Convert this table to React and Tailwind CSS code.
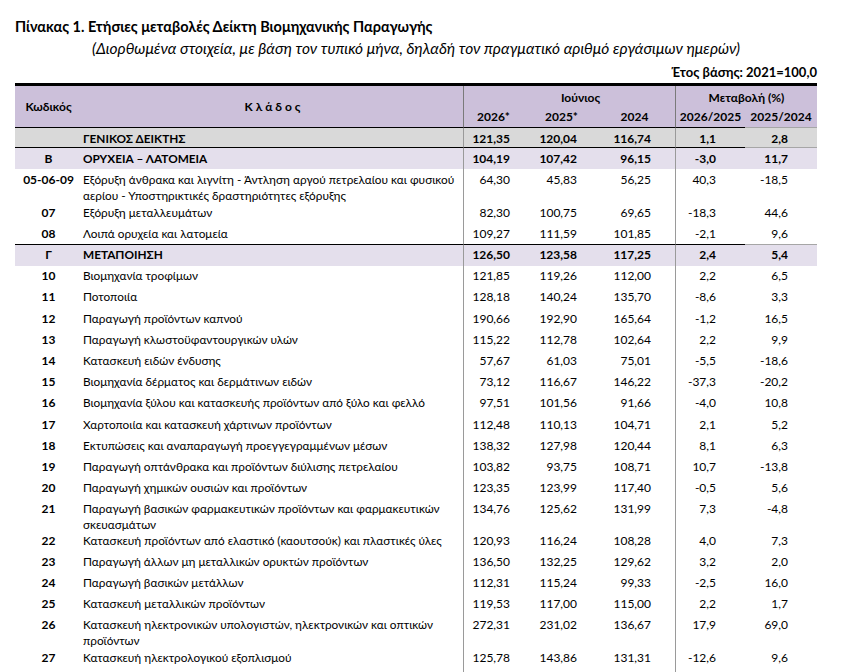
const rows = [
  { code: '', name: 'ΓΕΝΙΚΟΣ  ΔΕΙΚΤΗΣ', v: ['121,35', '120,04', '116,74', '1,1', '2,8'], kind: 'total', line: true, h: 'h-[20px]' },
  { code: 'Β', name: 'ΟΡΥΧΕΙΑ – ΛΑΤΟΜΕΙΑ', v: ['104,19', '107,42', '96,15', '-3,0', '11,7'], kind: 'section' },
  {
    code: '05-06-09',
    name: ['Εξόρυξη άνθρακα και λιγνίτη - Άντληση αργού πετρελαίου και φυσικού', 'αερίου - Υποστηρικτικές δραστηριότητες εξόρυξης'],
    v: ['64,30', '45,83', '56,25', '40,3', '-18,5'],
  },
  { code: '07', name: 'Εξόρυξη μεταλλευμάτων', v: ['82,30', '100,75', '69,65', '-18,3', '44,6'] },
  { code: '08', name: 'Λοιπά ορυχεία και λατομεία', v: ['109,27', '111,59', '101,85', '-2,1', '9,6'], line: true },
  { code: 'Γ', name: 'ΜΕΤΑΠΟΙΗΣΗ', v: ['126,50', '123,58', '117,25', '2,4', '5,4'], kind: 'section' },
  { code: '10', name: 'Βιομηχανία τροφίμων', v: ['121,85', '119,26', '112,00', '2,2', '6,5'] },
  { code: '11', name: 'Ποτοποιία', v: ['128,18', '140,24', '135,70', '-8,6', '3,3'] },
  { code: '12', name: 'Παραγωγή προϊόντων καπνού', v: ['190,66', '192,90', '165,64', '-1,2', '16,5'] },
  { code: '13', name: 'Παραγωγή κλωστοϋφαντουργικών υλών', v: ['115,22', '112,78', '102,64', '2,2', '9,9'] },
  { code: '14', name: 'Κατασκευή ειδών ένδυσης', v: ['57,67', '61,03', '75,01', '-5,5', '-18,6'] },
  { code: '15', name: 'Βιομηχανία δέρματος και δερμάτινων ειδών', v: ['73,12', '116,67', '146,22', '-37,3', '-20,2'] },
  { code: '16', name: 'Βιομηχανία ξύλου και κατασκευής προϊόντων από ξύλο και φελλό', v: ['97,51', '101,56', '91,66', '-4,0', '10,8'] },
  { code: '17', name: 'Χαρτοποιία και κατασκευή χάρτινων προϊόντων', v: ['112,48', '110,13', '104,71', '2,1', '5,2'] },
  { code: '18', name: 'Εκτυπώσεις και αναπαραγωγή προεγγεγραμμένων μέσων', v: ['138,32', '127,98', '120,44', '8,1', '6,3'] },
  { code: '19', name: 'Παραγωγή οπτάνθρακα και προϊόντων διύλισης πετρελαίου', v: ['103,82', '93,75', '108,71', '10,7', '-13,8'] },
  { code: '20', name: 'Παραγωγή χημικών ουσιών και προϊόντων', v: ['123,35', '123,99', '117,40', '-0,5', '5,6'] },
  {
    code: '21',
    name: ['Παραγωγή βασικών φαρμακευτικών προϊόντων και φαρμακευτικών', 'σκευασμάτων'],
    v: ['134,76', '125,62', '131,99', '7,3', '-4,8'],
    h: 'h-[32px]',
  },
  { code: '22', name: 'Κατασκευή προϊόντων από ελαστικό (καουτσούκ) και πλαστικές ύλες', v: ['120,93', '116,24', '108,28', '4,0', '7,3'], h: 'h-[21px]' },
  { code: '23', name: 'Παραγωγή άλλων μη μεταλλικών ορυκτών προϊόντων', v: ['136,50', '132,25', '129,62', '3,2', '2,0'], h: 'h-[21px]' },
  { code: '24', name: 'Παραγωγή βασικών μετάλλων', v: ['112,31', '115,24', '99,33', '-2,5', '16,0'], h: 'h-[21px]' },
  { code: '25', name: 'Κατασκευή μεταλλικών προϊόντων', v: ['119,53', '117,00', '115,00', '2,2', '1,7'], h: 'h-[21px]' },
  {
    code: '26',
    name: ['Κατασκευή ηλεκτρονικών υπολογιστών, ηλεκτρονικών και οπτικών', 'προϊόντων'],
    v: ['272,31', '231,02', '136,67', '17,9', '69,0'],
  },
  { code: '27', name: 'Κατασκευή ηλεκτρολογικού εξοπλισμού', v: ['125,78', '143,86', '131,31', '-12,6', '9,6'], h: 'h-[21px]' },
  { code: '28', name: 'Κατασκευή μηχανημάτων και ειδών εξοπλισμού π.δ.κ.', v: ['104,62', '98,17', '96,40', '6,6', '1,8'], h: 'h-[21px]' },
];

const pad = ['pr-[13px]', 'pr-[17px]', 'pr-[24px]', 'pr-[29px]', 'pr-[29px]'];

function Row({ r }) {
  const bold = r.kind ? 'font-bold' : '';
  const bg = r.kind === 'total' ? 'bg-[#d9d9d9]' : r.kind === 'section' ? 'bg-[#e4dfec]' : '';
  const two = Array.isArray(r.name);
  const h = r.h || (two ? 'h-[33px]' : 'h-[21.2px]');
  const line = r.line ? 'border-b border-black' : '';
  const cell = `${h} ${bg} ${line} pt-[2.5px] leading-[16px]`;

  return (
    <>
      <div className={`${cell} font-bold text-center`}>{r.code}</div>
      <div className={`${cell} ${bold} pl-[1px] whitespace-nowrap text-[11.8px]`}>
        {two ? (
          <>
            {r.name[0]}
            <br />
            {r.name[1]}
          </>
        ) : (
          r.name
        )}
      </div>
      {r.v.map((val, i) => (
        <div
          key={i}
          className={`${cell} ${bold} text-right ${pad[i]} ${i === 0 || i === 3 ? 'border-l border-l-[#9a9a9a]' : ''} ${
            i === 4 && r.line ? 'border-b-[#a6a6a6]' : ''
          }`}
        >
          {val}
        </div>
      ))}
    </>
  );
}

export default function App() {
  return (
    <div
      className="w-[865px] h-[672px] overflow-hidden bg-white text-black pt-[17px] px-[15px] text-[12px]"
      style={{ fontFamily: 'Lato, "Noto Sans", sans-serif' }}
    >
      <div className="w-[802px]">
        <div className="h-[20px] leading-[20px] text-[14.5px] font-bold">
          Πίνακας 1. Ετήσιες μεταβολές Δείκτη Βιομηχανικής Παραγωγής
        </div>
        <div className="mt-[1px] h-[20px] leading-[20px] text-[15.5px] italic text-center">
          (Διορθωμένα στοιχεία, με βάση τον τυπικό μήνα, δηλαδή τον πραγματικό αριθμό εργάσιμων ημερών)
        </div>
        <div className="mt-[4px] h-[20px] leading-[20px] text-[13px] font-bold text-right">
          Έτος βάσης: 2021=100,0
        </div>

        <div className="mt-[1px] border-t-[3px] border-black grid grid-cols-[67px_381px_60px_71px_81px_70px_72px]">
          {/* header */}
          <div className="row-span-2 bg-[#ccc0da] border-b border-black font-bold flex items-center justify-center">
            Κωδικός
          </div>
          <div className="row-span-2 bg-[#ccc0da] border-b border-black font-bold flex items-center justify-center">
            Κ λ ά δ ο ς
          </div>
          <div className="col-span-3 h-[21px] bg-[#ccc0da] border-l border-l-[#7a7a7a] font-bold flex items-end justify-center pl-[22px]">
            Ιούνιος
          </div>
          <div className="col-span-2 h-[21px] bg-[#ccc0da] border-l border-l-[#7a7a7a] font-bold flex items-end justify-center">
            Μεταβολή (%)
          </div>
          <div className="h-[21px] bg-[#ccc0da] border-b border-black border-l border-l-[#7a7a7a] font-bold flex items-center justify-center">
            2026*
          </div>
          <div className="h-[21px] bg-[#ccc0da] border-b border-black font-bold flex items-center justify-center pl-[6px]">
            2025*
          </div>
          <div className="h-[21px] bg-[#ccc0da] border-b border-black font-bold flex items-center justify-center">
            2024
          </div>
          <div className="h-[21px] bg-[#ccc0da] border-b border-black border-l border-l-[#7a7a7a] font-bold flex items-center justify-center">
            2026/2025
          </div>
          <div className="h-[21px] bg-[#ccc0da] border-b border-b-[#a6a6a6] font-bold flex items-center justify-center">
            2025/2024
          </div>

          {rows.map((r) => (
            <Row key={r.code + r.v[0]} r={r} />
          ))}
        </div>
      </div>
    </div>
  );
}
